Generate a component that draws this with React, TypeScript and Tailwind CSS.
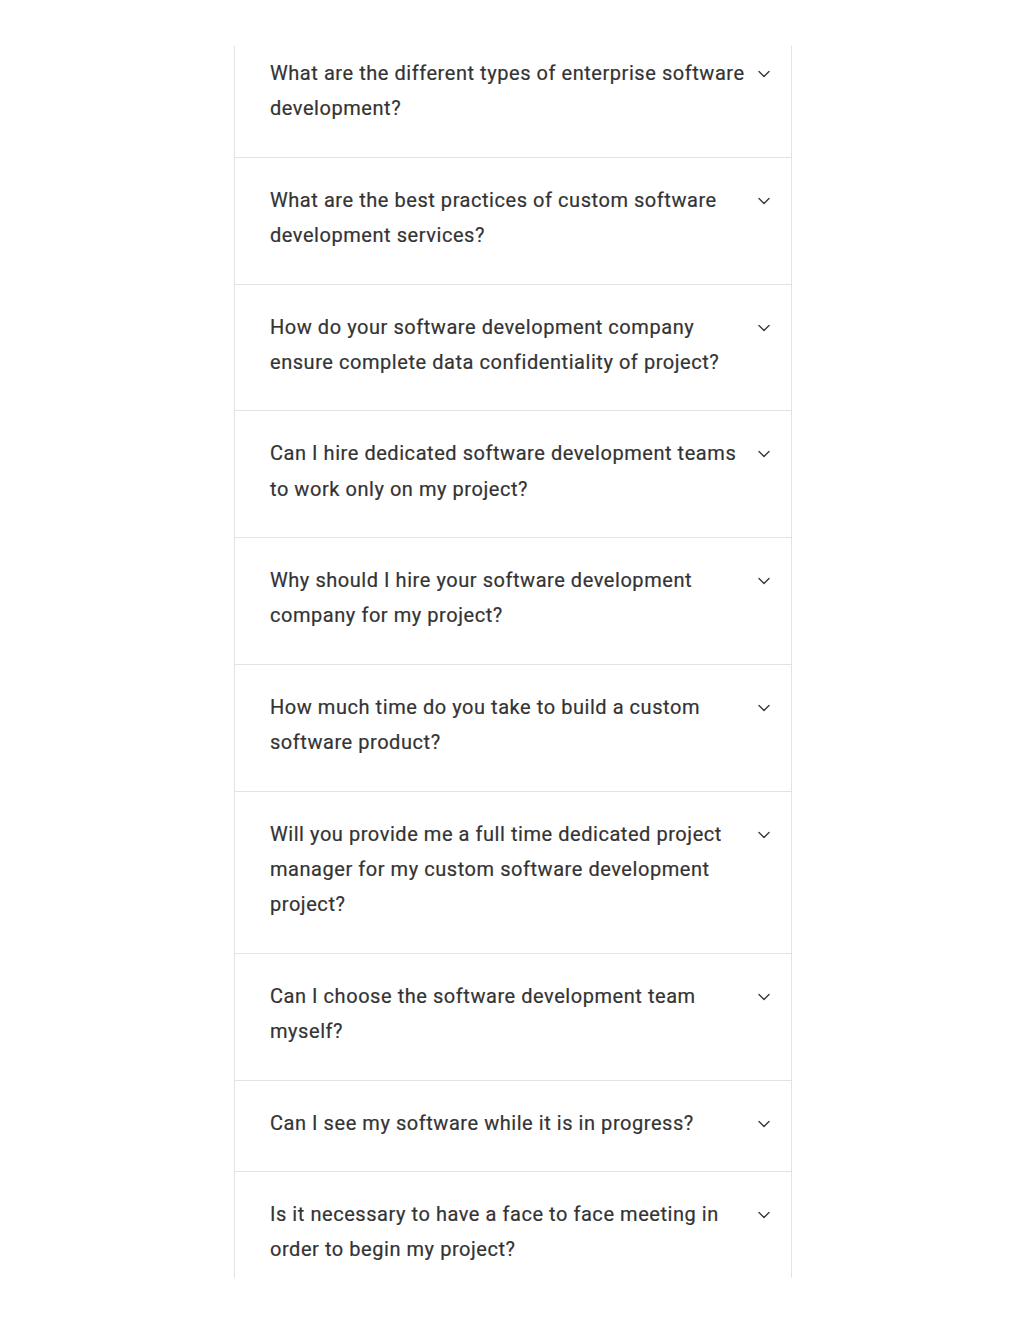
const faqs = [
  "What are the different types of enterprise software development?",
  "What are the best practices of custom software development services?",
  "How do your software development company ensure complete data confidentiality of project?",
  "Can I hire dedicated software development teams to work only on my project?",
  "Why should I hire your software development company for my project?",
  "How much time do you take to build a custom software product?",
  "Will you provide me a full time dedicated project manager for my custom software development project?",
  "Can I choose the software development team myself?",
  "Can I see my software while it is in progress?",
  "Is it necessary to have a face to face meeting in order to begin my project?",
];

function Chevron() {
  return (
    <svg width="14" height="14" viewBox="0 0 14 14" fill="none" className="shrink-0 mt-[11px]">
      <path d="M2 4.5 L7 9.5 L12 4.5" stroke="#3a3a3a" strokeWidth="1.4" strokeLinecap="round" strokeLinejoin="round" />
    </svg>
  );
}

export default function App() {
  return (
    <div className="min-h-[1325px] bg-white pt-[46px] pl-[2px]" style={{ fontFamily: '"Roboto", "Liberation Sans", sans-serif' }}>
      <div className="mx-auto w-[558px] h-[1232px] overflow-hidden border-x border-[#e3e3e3]">
        {faqs.map((q, i) => (
          <div
            key={i}
            className={`flex items-start justify-between gap-3 pl-[35px] pr-[20px] ${i === 0 ? "pt-[10px]" : "pt-[25px]"} pb-[30.4px] ${i < faqs.length - 1 ? "border-b border-[#e3e3e3]" : ""}`}
          >
            <p className="text-[20px] leading-[35.2px] tracking-[0.55px] text-[#333333] max-w-[480px] [-webkit-text-stroke:0.2px_#333333]">{q}</p>
            <Chevron />
          </div>
        ))}
      </div>
    </div>
  );
}
